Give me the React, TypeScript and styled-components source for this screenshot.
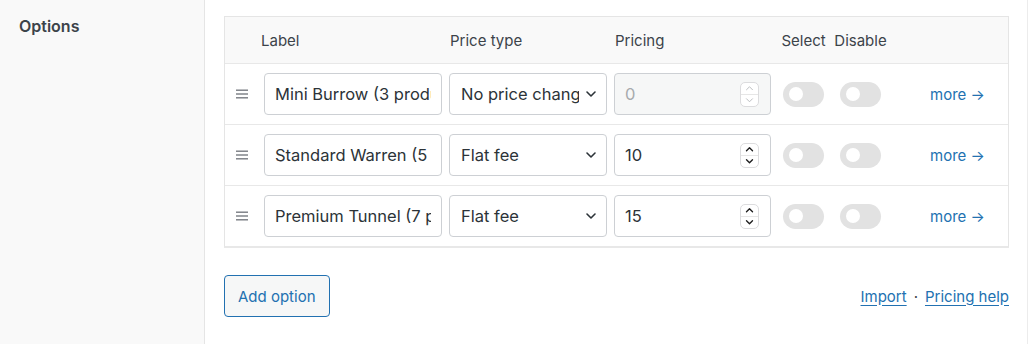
import styled, { createGlobalStyle } from 'styled-components'

const GlobalStyle = createGlobalStyle`
  * { box-sizing: border-box; }
  body {
    margin: 0;
    background: #fff;
    font-family: Inter, "Noto Sans", "Liberation Sans", sans-serif;
    color: #2c3338;
  }
`

type option = {
  label: string
  priceType: string
  price: string
  disabled?: boolean
}

const options: option[] = [
  { label: 'Mini Burrow (3 products)', priceType: 'No price change', price: '0', disabled: true },
  { label: 'Standard Warren (5 products)', priceType: 'Flat fee', price: '10' },
  { label: 'Premium Tunnel (7 products)', priceType: 'Flat fee', price: '15' },
]

const COLUMNS = '39px 185px 165px 169px 57px 41px 1fr'

const Page = styled.div`
  display: grid;
  grid-template-columns: 205px 1fr;
  min-height: 344px;
`

const Sidebar = styled.aside`
  background: #f9f9f9;
  border-right: 1px solid #e5e5e5;
  padding: 16px 19px;

  h2 {
    margin: 0;
    font-size: 16px;
    font-weight: 600;
    color: #3c434a;
  }
`

const Main = styled.main`
  padding: 16px 18px 0 19px;
  margin-right: 1px;
  border-right: 1px solid #ececec;
`

const Table = styled.div`
  border: 1px solid #e5e5e5;
  border-bottom-width: 2px;
  border-bottom-color: #e8e8e8;
`

const Head = styled.div`
  display: grid;
  grid-template-columns: ${COLUMNS};
  align-items: center;
  height: 46px;
  background: #f9f9f9;
  font-size: 15px;
  color: #3c434a;
`

const HeadCell = styled.div<{ $shift?: number }>`
  margin-left: ${({ $shift }) => $shift || 0}px;
  white-space: nowrap;
`

const ToggleHead = styled.div`
  width: 41px;
  display: flex;
  justify-content: center;
  white-space: nowrap;
`

const Row = styled.div`
  display: grid;
  grid-template-columns: ${COLUMNS};
  align-items: center;
  height: 61px;
  border-top: 1px solid #e8e8e8;
`

const Handle = styled.div`
  padding-left: 11px;
  display: flex;
  color: #787c82;
`

const fieldBase = `
  height: 42px;
  border: 1px solid #cdd0d4;
  border-radius: 4px;
  background: #fff;
  font-size: 16.5px;
  font-family: inherit;
  color: #2c3338;
`

const TextInput = styled.input`
  ${fieldBase}
  width: 178px;
  padding: 0 10px;
  outline: none;
`

const SelectBox = styled.div`
  ${fieldBase}
  width: 158px;
  display: flex;
  align-items: center;
  padding: 0 9px 0 11px;
  gap: 6px;

  span {
    flex: 1;
    overflow: hidden;
    white-space: nowrap;
  }
`

const NumberBox = styled.div<{ $disabled?: boolean }>`
  ${fieldBase}
  width: 157px;
  display: flex;
  align-items: center;
  padding: 0 11px 0 10px;
  background: ${({ $disabled }) => ($disabled ? '#f6f7f7' : '#fff')};

  input {
    flex: 1;
    min-width: 0;
    border: none;
    outline: none;
    background: transparent;
    font: inherit;
    color: ${({ $disabled }) => ($disabled ? '#a7aaad' : '#2c3338')};
    padding: 0;
  }
`

const Spinner = styled.div<{ $disabled?: boolean }>`
  width: 19px;
  height: 25px;
  border: 1px solid #dcdcde;
  border-radius: 5px;
  background: #fff;
  display: flex;
  flex-direction: column;
  color: ${({ $disabled }) => ($disabled ? '#b4b7ba' : '#1e1e1e')};

  div {
    flex: 1;
    display: flex;
    align-items: center;
    justify-content: center;
  }
  div + div {
    border-top: 1px solid #e6e6e6;
  }
`

const Toggle = styled.div`
  width: 41px;
  height: 25px;
  border-radius: 13px;
  background: #e2e2e2;
  display: flex;
  align-items: center;
  padding-left: 6px;

  &::after {
    content: '';
    width: 14px;
    height: 14px;
    border-radius: 50%;
    background: #fff;
  }
`

const More = styled.a`
  padding-left: 49px;
  font-size: 15px;
  color: #2271b1;
  text-decoration: none;
  white-space: nowrap;
`

const Footer = styled.div`
  display: flex;
  justify-content: space-between;
  align-items: center;
  margin-top: 27px;
`

const Button = styled.button`
  height: 42px;
  padding: 0 13px;
  border: 1px solid #2271b1;
  border-radius: 4px;
  background: #f6f7f7;
  color: #2271b1;
  font-family: inherit;
  font-size: 15px;
`

const Links = styled.div`
  display: flex;
  align-items: center;
  gap: 7px;
  font-size: 15px;
  color: #3c434a;

  a {
    color: #2271b1;
    text-decoration: underline;
    text-underline-offset: 3px;
  }
`

const DragIcon = () => (
  <svg width="12" height="10" viewBox="0 0 12 10" fill="currentColor">
    <rect x="0" y="0.5" width="12" height="1.4" />
    <rect x="0" y="4.3" width="12" height="1.4" />
    <rect x="0" y="8.1" width="12" height="1.4" />
  </svg>
)

const Chevron = ({ up, size = 12, weight = 1.6 }: { up?: boolean; size?: number; weight?: number }) => (
  <svg width={size} height={size / 2 + 2} viewBox="0 0 12 8" fill="none" stroke="currentColor" strokeWidth={weight} strokeLinecap="round" strokeLinejoin="round">
    {up ? <path d="M2 6 L6 2 L10 6" /> : <path d="M2 2 L6 6 L10 2" />}
  </svg>
)

const OptionRow = ({ label, priceType, price, disabled }: option) => {
  return (
    <Row>
      <Handle>
        <DragIcon />
      </Handle>
      <div>
        <TextInput value={label} readOnly />
      </div>
      <div>
        <SelectBox>
          <span>{priceType}</span>
          <Chevron />
        </SelectBox>
      </div>
      <div>
        <NumberBox $disabled={disabled}>
          <input value={price} readOnly />
          <Spinner $disabled={disabled}>
            <div>
              <Chevron up size={9} weight={disabled ? 1.2 : 1.8} />
            </div>
            <div>
              <Chevron size={9} weight={disabled ? 1.2 : 1.8} />
            </div>
          </Spinner>
        </NumberBox>
      </div>
      <Toggle />
      <Toggle />
      <More href="#">more →</More>
    </Row>
  )
}

const App = () => {
  return (
    <>
      <GlobalStyle />
      <Page>
        <Sidebar>
          <h2>Options</h2>
        </Sidebar>
        <Main>
          <Table>
            <Head>
              <div />
              <HeadCell $shift={-3}>Label</HeadCell>
              <HeadCell $shift={1}>Price type</HeadCell>
              <HeadCell $shift={1}>Pricing</HeadCell>
              <ToggleHead>Select</ToggleHead>
              <ToggleHead>Disable</ToggleHead>
              <div />
            </Head>
            {options.map((o) => (
              <OptionRow key={o.label} {...o} />
            ))}
          </Table>
          <Footer>
            <Button>Add option</Button>
            <Links>
              <a href="#">Import</a>
              <span>·</span>
              <a href="#">Pricing help</a>
            </Links>
          </Footer>
        </Main>
      </Page>
    </>
  )
}

export default App
